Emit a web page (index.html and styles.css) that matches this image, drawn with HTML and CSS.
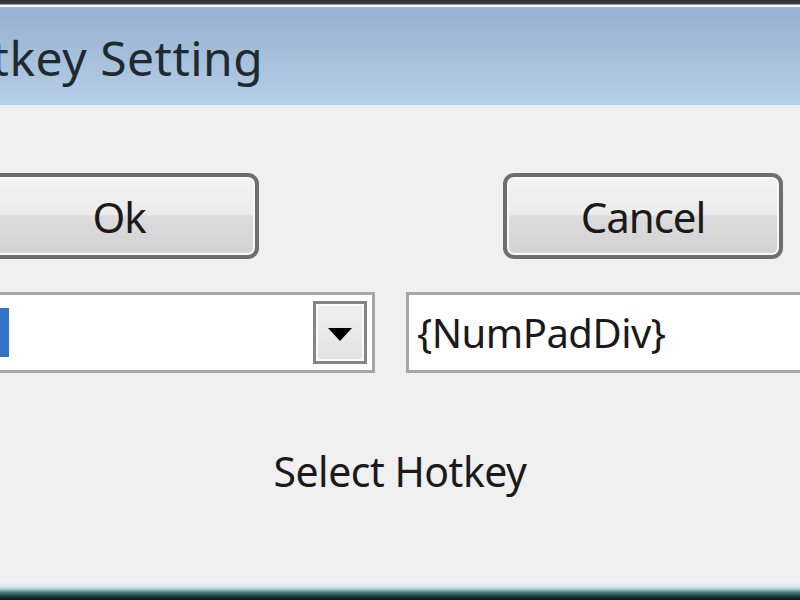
FILE: index.html
```html
<!DOCTYPE html>
<html lang="en">
<head>
    <meta charset="UTF-8">
    <meta name="viewport" content="width=device-width, initial-scale=1.0">
    <title>Hotkey Setting</title>
    <link rel="stylesheet" href="styles.css">
</head>
<body>
    <div class="window">
        <div class="frame-top"></div>
        <div class="titlebar">
            <span class="title">Hotkey Setting</span>
        </div>
        <div class="content">
            <div class="grid">
                <button class="btn btn-ok">Ok</button>
                <button class="btn btn-cancel">Cancel</button>

                <div class="combo">
                    <span class="combo-sel"></span>
                    <span class="combo-drop"><span class="arrow"></span></span>
                </div>
                <div class="field">{NumPadDiv}</div>
            </div>
            <div class="label">Select Hotkey</div>
        </div>
        <div class="frame-bottom"></div>
    </div>
</body>
</html>
```

FILE: styles.css
```css
body {
    margin: 0;
    background-color: #f0f0f0;
    font-family: "Noto Sans", "Open Sans", sans-serif;
    overflow: hidden;
}

.window {
    display: flex;
    flex-direction: column;
    width: 800px;
    height: 600px;
    overflow: hidden;
}

.frame-top {
    height: 8px;
    background: linear-gradient(#2c3232 0, #3c4242 4px, #9aa0a0 4px, #9aa0a0 5px, #f8fafc 5px, #f8fafc 7px, #a0b8d4 7px);
}

.titlebar {
    height: 97px;
    display: flex;
    align-items: center;
    background: linear-gradient(#98b0d2, #a2bcd8 40%, #b0c8e2 80%, #b8d0e8);
    border-bottom: 3px solid #e8eff6;
}

.title {
    margin-left: -74px;
    margin-top: 2px;
    font-size: 48px;
    color: #1f2a30;
    letter-spacing: 0.5px;
    white-space: nowrap;
}

.content {
    flex: 1;
    display: flex;
    flex-direction: column;
    align-items: center;
}

.grid {
    align-self: flex-start;
    display: grid;
    grid-template-columns: 396px 420px;
    column-gap: 31px;
    row-gap: 33px;
    margin-left: -21px;
    margin-top: 65px;
}

.btn {
    height: 86px;
    width: 280px;
    border: 4px solid #6e6e6e;
    border-radius: 11px;
    background: linear-gradient(#f3f3f3 0, #ececec 48%, #dcdcdc 50%, #d2d2d2 100%);
    box-shadow: inset 0 0 0 2px #f8f8f8;
    font-family: "Noto Sans", "Open Sans", sans-serif;
    font-size: 42px;
    color: #1a1a1a;
    padding: 0;
    letter-spacing: -1px;
}

.btn-cancel {
    margin-left: 97px;
}

.combo {
    height: 81px;
    box-sizing: border-box;
    border: 3px solid #a6a6a6;
    background: #fff;
    display: flex;
    align-items: center;
    justify-content: space-between;
    padding: 0 5px 0 8px;
}

.combo-sel {
    width: 19px;
    height: 49px;
    background-color: #3573c6;
}

.combo-drop {
    width: 54px;
    height: 63px;
    box-sizing: border-box;
    border: 3px solid #858585;
    box-shadow: inset 0 0 0 2px #fafafa;
    background: linear-gradient(#f0f0f0, #e2e2e2);
    display: flex;
    align-items: center;
    justify-content: center;
}

.arrow {
    width: 0;
    height: 0;
    border-left: 12px solid transparent;
    border-right: 12px solid transparent;
    border-top: 13px solid #000;
    margin-top: 4px;
}

.field {
    height: 81px;
    box-sizing: border-box;
    border: 3px solid #a6a6a6;
    background: #fff;
    display: flex;
    align-items: center;
    padding-left: 8px;
    font-size: 40px;
    color: #1a1a1a;
    letter-spacing: -0.5px;
}

.label {
    margin-top: 70px;
    font-size: 41px;
    color: #1a1a1a;
    letter-spacing: -0.5px;
}

.frame-bottom {
    height: 17px;
    background: linear-gradient(#e6eef6 0, #dfe8f0 4px, #a8d0d0 6px, #4e8888 9px, #1c3c3c 13px, #0a1616 17px);
}
```
